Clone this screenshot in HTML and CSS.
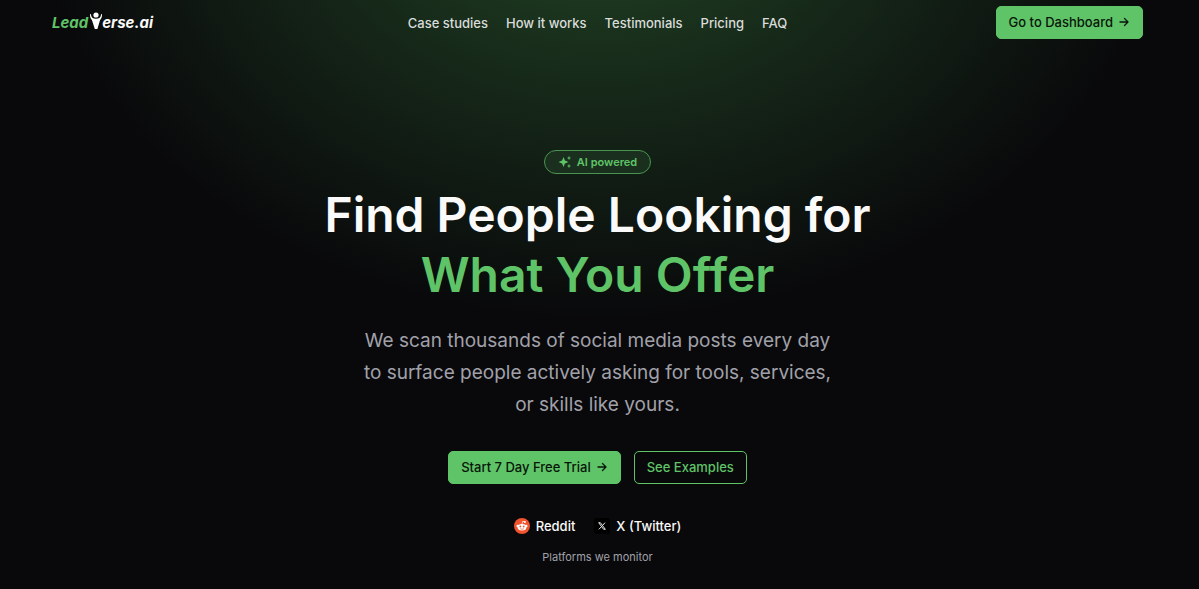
FILE: index.html
```html
<!DOCTYPE html>
<html lang="en">
<head>
<meta charset="utf-8">
<meta name="viewport" content="width=device-width, initial-scale=1">
<title>LeadVerse.ai</title>
<link rel="stylesheet" href="styles.css">
</head>
<body>
<div class="page">
  <header class="header">
    <a class="logo" href="#" aria-label="LeadVerse.ai"><span class="logo-lead">Lead</span><svg class="logo-mark" viewBox="0 0 12 18" aria-hidden="true"><circle cx="6" cy="3" r="2.600"/><path d="M1 2C.8 4.800 2.800 6.800 6 6.800S11.200 4.800 11 2l.9.200C12.200 4.600 11.500 6.500 10 8.300L7.400 17H4.800L2 8.300C.5 6.500-.2 4.600.1 2.200Z"/></svg><span>erse.ai</span></a>
    <nav class="nav">
      <a href="#cases">Case studies</a>
      <a href="#how">How it works</a>
      <a href="#testimonials">Testimonials</a>
      <a href="#pricing">Pricing</a>
      <a href="#faq">FAQ</a>
    </nav>
    <div class="header-action">
      <a class="button button-primary" href="#dashboard">Go to Dashboard <svg class="arrow" viewBox="0 0 12 12" aria-hidden="true"><path d="M2 6h8M6.500 2.500 10 6 6.500 9.500"/></svg></a>
    </div>
  </header>
  <main class="hero">
    <p class="badge"><svg class="sparkles" viewBox="0 0 14 14" aria-hidden="true"><path d="M5.500 2 6.900 5.600 10.500 7 6.900 8.400 5.500 12 4.100 8.400.5 7 4.100 5.600ZM11 .8l.6 1.600 1.600.6-1.600.6L11 5.200l-.6-1.600L8.800 3l1.600-.6ZM11 8.800l.6 1.600 1.600.6-1.600.6-.6 1.600-.6-1.600L8.800 11l1.600-.6Z"/></svg>AI powered</p>
    <h1 class="title">Find People Looking for<br><span class="accent">What You Offer</span></h1>
    <p class="lead">We scan thousands of social media posts every day to surface people actively asking for tools, services, or skills like yours.</p>
    <div class="actions">
      <a class="button button-primary" href="#trial">Start 7 Day Free Trial <svg class="arrow" viewBox="0 0 12 12" aria-hidden="true"><path d="M2 6h8M6.500 2.500 10 6 6.500 9.500"/></svg></a>
      <a class="button button-outline" href="#examples">See Examples</a>
    </div>
    <ul class="platforms">
      <li><svg class="platform-icon" viewBox="0 0 16 16" aria-hidden="true"><circle cx="8" cy="8" r="8" fill="#f0532d"/><g fill="#fff"><ellipse cx="8" cy="9.200" rx="4.400" ry="3.300"/><circle cx="3.700" cy="7.900" r="1.200"/><circle cx="12.300" cy="7.900" r="1.200"/><circle cx="10.900" cy="3.900" r="1"/></g><path d="M8 6.200 8.700 3.300l2 .5" fill="none" stroke="#fff" stroke-width=".7"/><circle cx="6.300" cy="8.500" r=".9" fill="#f0532d"/><circle cx="9.700" cy="8.500" r=".9" fill="#f0532d"/><path d="M6.200 10.700q1.800 1.100 3.600 0" fill="none" stroke="#f0532d" stroke-width=".7"/></svg>Reddit</li>
      <li><svg class="platform-icon" viewBox="0 0 16 16" aria-hidden="true"><rect width="16" height="16" rx="3" fill="#000"/><path d="M4.700 4.700h1.700l4.900 6.600H9.600ZM11 4.700 8.500 7.500M7.400 8.700l-2.500 2.600" fill="none" stroke="#e8e8e8" stroke-width="1"/></svg>X (Twitter)</li>
    </ul>
    <p class="note">Platforms we monitor</p>
  </main>
</div>
</body>
</html>
```
FILE: styles.css
```css
* { box-sizing: border-box; }
body {
  margin: 0;
  background: #09090b;
  color: #fafafa;
  font-family: Inter, "Liberation Sans", sans-serif;
  font-size: 13px;
  line-height: 20px;
}
a { color: inherit; text-decoration: none; }
.page {
  min-height: 100vh;
  background: radial-gradient(ellipse 47% 74% at 50% -20%, rgba(44, 94, 48, 0.72), transparent);
}
.header {
  display: grid;
  grid-template-columns: 1fr auto 1fr;
  align-items: center;
  padding: 6px 56px 6px 52px;
}
.logo {
  display: flex;
  align-items: center;
  font-size: 15px;
  font-weight: 700;
  font-style: italic;
}
.logo-lead, .accent { color: #5fc467; }
.logo-mark { width: 12px; height: 18px; margin: 0 0 3px 2px; fill: #fff; }
.nav { display: flex; gap: 18px; font-weight: 500; color: #d9dcda; }
.header-action { display: flex; justify-content: flex-end; }
.button {
  display: inline-flex;
  align-items: center;
  gap: 5px;
  padding: 5px 12px 6px;
  border: 1px solid #5fc467;
  border-radius: 5px;
  font-weight: 500;
  white-space: nowrap;
}
.button-primary { background: #5fc467; color: #08160a; }
.button-outline { color: #5fc467; }
.arrow { width: 12px; height: 12px; fill: none; stroke: currentColor; stroke-width: 1.3; stroke-linecap: round; stroke-linejoin: round; }
.hero {
  display: flex;
  flex-direction: column;
  align-items: center;
  padding: 105px 56px 24px 52px;
  text-align: center;
}
.badge {
  display: flex;
  align-items: center;
  gap: 5px;
  margin: 0;
  padding: 1px 13px;
  border: 1px solid #479550;
  border-radius: 12px;
  background: #1a2f1e;
  color: #5fc467;
  font-size: 11px;
  font-weight: 600;
}
.sparkles { width: 14px; height: 14px; fill: currentColor; }
.title { margin: 11px 0 0; font-size: 48px; font-weight: 600; line-height: 60px; }
.lead { max-width: 480px; margin: 20px 0 0; color: #a1a1aa; font-size: 19px; line-height: 32px; }
.actions { display: flex; gap: 13px; margin-top: 30px; }
.platforms {
  display: flex;
  gap: 19px;
  margin: 32px 0 0;
  padding: 0;
  list-style: none;
  font-weight: 500;
}
.platforms li { display: flex; align-items: center; gap: 6px; }
.platform-icon { width: 16px; height: 16px; }
.note { margin: 11px 0 0; color: #a1a1aa; font-size: 11px; }
```
